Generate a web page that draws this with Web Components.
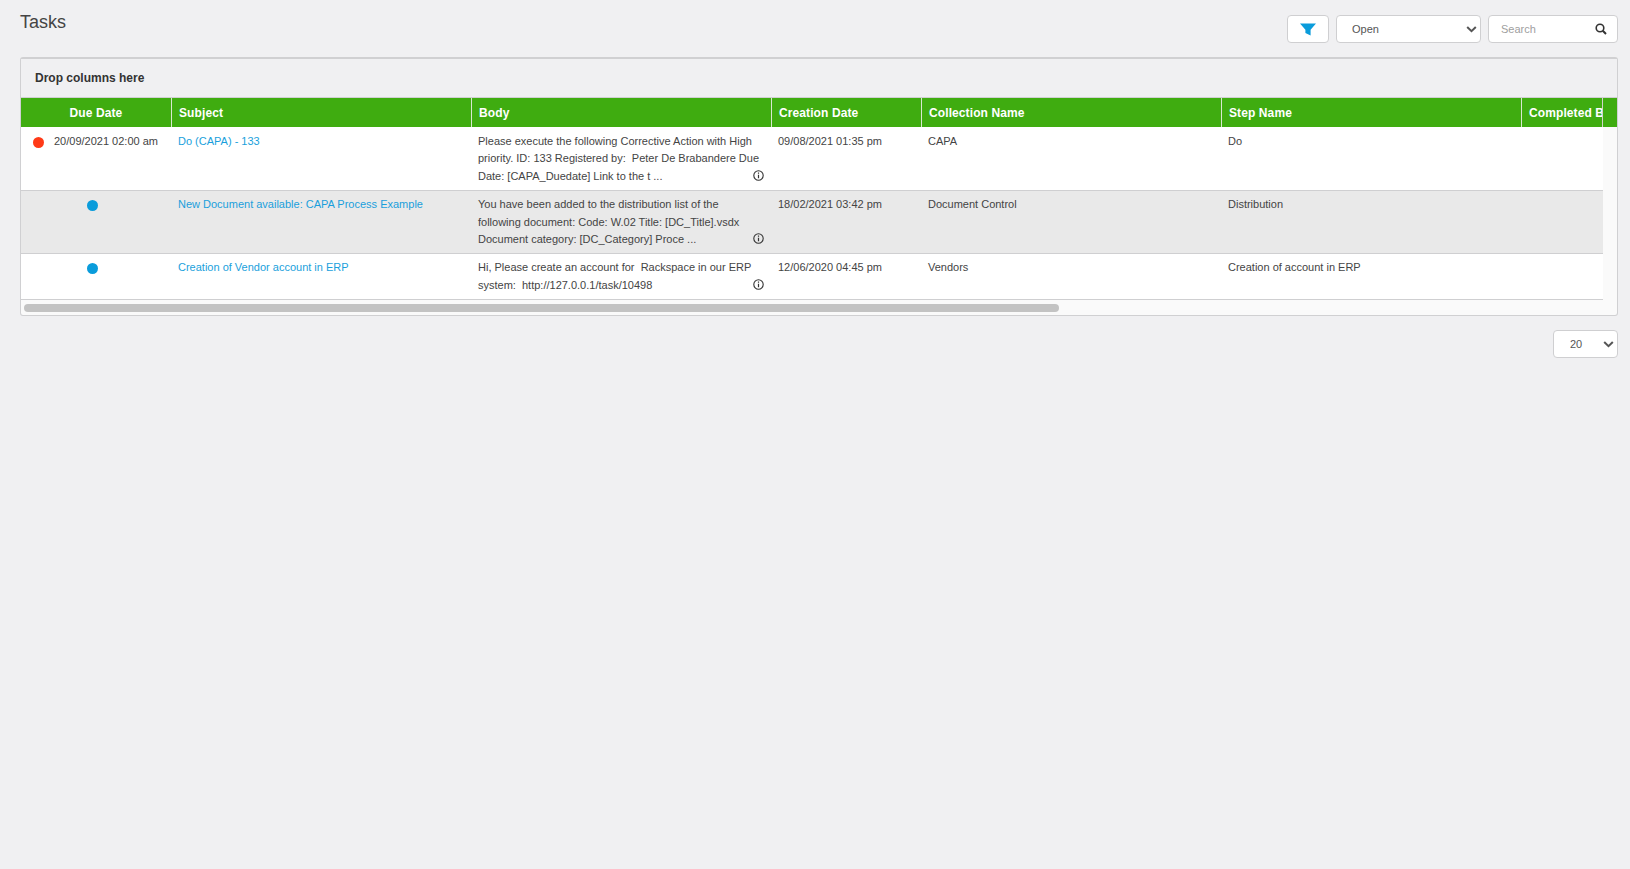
<!DOCTYPE html>
<html>
<head>
<meta charset="utf-8">
<title>Tasks</title>
<style>
    html, body {
        margin: 0;
        height: 100%;
        background-color: #f0f0f2;
        font-family: "Liberation Sans", Arial, sans-serif;
        color: #333;
    }
</style>
</head>
<body>
<tasks-page></tasks-page>

<script>
const COLUMNS = '151px 300px 300px 150px 300px 300px 300px';

class SelectBox extends HTMLElement {
    constructor() {
        super();
        this.attachShadow({ mode: 'open' });
        const options = (this.getAttribute('options') || '').split(',');
        this.shadowRoot.innerHTML = `
            <style>
                :host {
                    display: block;
                    position: relative;
                    box-sizing: border-box;
                    height: 28px;
                }
                select {
                    appearance: none;
                    -webkit-appearance: none;
                    width: 100%;
                    height: 100%;
                    box-sizing: border-box;
                    border: 1px solid #cfcfd1;
                    border-radius: 4px;
                    background-color: #fff;
                    color: #555;
                    font: 11px "Liberation Sans", Arial, sans-serif;
                    padding: 0 0 0 var(--pad, 15px);
                    outline: none;
                }
                svg {
                    position: absolute;
                    right: 4px;
                    top: 11px;
                    pointer-events: none;
                }
            </style>
            <select>${options.map(o => `<option>${o}</option>`).join('')}</select>
            <svg width="11" height="7" viewBox="0 0 11 7"><path d="M1.2 1 5.5 5.2 9.8 1" fill="none" stroke="#555" stroke-width="2"/></svg>
        `;
    }
}

class TasksToolbar extends HTMLElement {
    constructor() {
        super();
        this.attachShadow({ mode: 'open' });
        this.shadowRoot.innerHTML = `
            <style>
                :host {
                    display: flex;
                    justify-content: space-between;
                    align-items: flex-start;
                    height: 57px;
                }
                h1 {
                    margin: 12px 0 0;
                    font-size: 18px;
                    line-height: 21px;
                    font-weight: normal;
                    color: #444;
                }
                .tools {
                    display: flex;
                    gap: 7px;
                    margin-top: 15px;
                }
                button {
                    width: 42px;
                    height: 28px;
                    box-sizing: border-box;
                    padding: 0;
                    border: 1px solid #cfcfd1;
                    border-radius: 4px;
                    background-color: #fff;
                    display: flex;
                    align-items: center;
                    justify-content: center;
                }
                select-box { width: 145px; }
                .search {
                    width: 130px;
                    height: 28px;
                    box-sizing: border-box;
                    border: 1px solid #cfcfd1;
                    border-radius: 4px;
                    background-color: #fff;
                    display: flex;
                    align-items: center;
                    padding: 0 10px 0 12px;
                }
                input {
                    flex: 1;
                    min-width: 0;
                    border: none;
                    outline: none;
                    padding: 0;
                    background: transparent;
                    font: 11px "Liberation Sans", Arial, sans-serif;
                }
                input::placeholder { color: #a0a0a0; opacity: 1; }
            </style>
            <h1>Tasks</h1>
            <div class="tools">
                <button aria-label="Filter">
                    <svg width="16" height="13" viewBox="0 0 16 13"><path d="M0 .5H16L10.6 6.8V12.5L5.4 10V6.8Z" fill="#0a9cdb"/></svg>
                </button>
                <select-box options="Open,Closed,All"></select-box>
                <div class="search">
                    <input placeholder="Search">
                    <svg width="12" height="12" viewBox="0 0 12 12"><circle cx="5" cy="5" r="3.8" fill="none" stroke="#333" stroke-width="1.6"/><path d="M7.8 7.8 11 11" stroke="#333" stroke-width="2"/></svg>
                </div>
            </div>
        `;
    }
}

class GridHeader extends HTMLElement {
    constructor() {
        super();
        this.attachShadow({ mode: 'open' });
        const titles = ['Due Date', 'Subject', 'Body', 'Creation Date', 'Collection Name', 'Step Name', 'Completed By'];
        this.shadowRoot.innerHTML = `
            <style>
                :host {
                    display: block;
                    height: 29.4px;
                    background-color: #3fac10;
                    overflow: hidden;
                }
                .clip {
                    width: 1581px;
                    overflow: hidden;
                    border-right: 1px solid #cfd6c9;
                    height: 100%;
                }
                .cols {
                    display: grid;
                    grid-template-columns: ${COLUMNS};
                    height: 100%;
                    width: max-content;
                }
                span {
                    box-sizing: border-box;
                    border-right: 1px solid #d8e8d0;
                    padding-left: 7px;
                    color: #fff;
                    font-size: 12px;
                    letter-spacing: 0.1px;
                    font-weight: bold;
                    line-height: 30px;
                    white-space: nowrap;
                    overflow: hidden;
                }
                span:first-child { text-align: center; padding-left: 0; }
            </style>
            <div class="clip"><div class="cols">${titles.map(t => `<span>${t}</span>`).join('')}</div></div>
        `;
    }
}

class TaskRow extends HTMLElement {
    constructor() {
        super();
        this.attachShadow({ mode: 'open' });
        const overdue = this.hasAttribute('overdue');
        const due = this.getAttribute('due') || '';
        this.shadowRoot.innerHTML = `
            <style>
                :host {
                    display: block;
                    box-sizing: border-box;
                    width: 1582px;
                    background-color: #fff;
                    border-bottom: 1px solid #cfcfd1;
                    font-size: 11px;
                    line-height: 17.6px;
                    color: #444;
                }
                :host([shaded]) { background-color: #e9e9e9; }
                .cols {
                    display: grid;
                    grid-template-columns: 151px 300px 300px 150px 300px 281px;
                }
                .cell {
                    padding: 5.4px 7px 4.1px 6px;
                    min-width: 0;
                }
                .due {
                    display: flex;
                    gap: 10px;
                    padding: 5.4px 0 0 12px;
                    white-space: nowrap;
                }
                .due.only {
                    justify-content: center;
                    padding-left: 0;
                    padding-right: 8px;
                }
                .dot {
                    flex: none;
                    width: 11px;
                    height: 11px;
                    border-radius: 50%;
                    margin-top: 3.8px;
                    background-color: ${overdue ? '#ff3a17' : '#0a9cdb'};
                }
                a { color: #1a9fdc; text-decoration: none; }
                .body { position: relative; padding-right: 10px; }
                svg {
                    position: absolute;
                    right: 8px;
                    bottom: 9px;
                }
            </style>
            <div class="cols">
                <div class="due ${due ? '' : 'only'}"><i class="dot"></i>${due}</div>
                <div class="cell"><a href="#"><slot name="subject"></slot></a></div>
                <div class="cell body"><slot name="body"></slot>
                    <svg width="11" height="11" viewBox="0 0 11 11"><circle cx="5.5" cy="5.5" r="4.7" fill="none" stroke="#333" stroke-width="1.1"/><path d="M5.5 4.8V8.2M5.5 2.6V3.8" stroke="#333" stroke-width="1.2"/></svg>
                </div>
                <div class="cell">${this.getAttribute('created') || ''}</div>
                <div class="cell">${this.getAttribute('collection') || ''}</div>
                <div class="cell">${this.getAttribute('step') || ''}</div>
            </div>
        `;
    }
}

class TaskGrid extends HTMLElement {
    constructor() {
        super();
        this.attachShadow({ mode: 'open' });
        this.shadowRoot.innerHTML = `
            <style>
                :host {
                    display: block;
                    box-sizing: border-box;
                    border: 1px solid #d0d0d2;
                    border-top-width: 2px;
                    border-radius: 3px;
                    background-color: #fafafa;
                }
                .drop {
                    height: 39px;
                    line-height: 38px;
                    box-sizing: border-box;
                    border-bottom: 1px solid #d0d0d2;
                    padding-left: 14px;
                    background-color: #f0f0f2;
                    font-size: 12px;
                    font-weight: bold;
                    color: #333;
                }
                .scroll {
                    height: 15.3px;
                    width: 1582px;
                    box-sizing: border-box;
                    padding: 4.3px 0 0 3px;
                }
                .thumb {
                    width: 1035px;
                    height: 8px;
                    border-radius: 4px;
                    background-color: #c3c3c3;
                }
            </style>
            <div class="drop">Drop columns here</div>
            <slot></slot>
            <div class="scroll"><div class="thumb"></div></div>
        `;
    }
}

class TasksPage extends HTMLElement {
    constructor() {
        super();
        this.attachShadow({ mode: 'open' });
        this.shadowRoot.innerHTML = `
            <style>
                :host {
                    display: block;
                    padding: 0 12px 0 20px;
                }
                .pager {
                    display: flex;
                    justify-content: flex-end;
                    margin-top: 14px;
                }
                select-box { width: 65px; --pad: 16px; }
            </style>
            <tasks-toolbar></tasks-toolbar>
            <task-grid>
                <grid-header></grid-header>
                <task-row overdue due="20/09/2021 02:00 am" created="09/08/2021 01:35 pm" collection="CAPA" step="Do">
                    <span slot="subject">Do (CAPA) - 133</span>
                    <span slot="body">Please execute the following Corrective Action with High priority. ID: 133 Registered by:&nbsp; Peter De Brabandere Due Date: [CAPA_Duedate] Link to the t ...</span>
                </task-row>
                <task-row shaded created="18/02/2021 03:42 pm" collection="Document Control" step="Distribution">
                    <span slot="subject">New Document available: CAPA Process Example</span>
                    <span slot="body">You have been added to the distribution list of the following document: Code: W.02 Title: [DC_Title].vsdx Document category: [DC_Category] Proce ...</span>
                </task-row>
                <task-row created="12/06/2020 04:45 pm" collection="Vendors" step="Creation of account in ERP">
                    <span slot="subject">Creation of Vendor account in ERP</span>
                    <span slot="body">Hi, Please create an account for&nbsp; Rackspace in our ERP system:&nbsp; http://127.0.0.1/task/10498</span>
                </task-row>
            </task-grid>
            <div class="pager"><select-box options="20,50,100"></select-box></div>
        `;
    }
}

customElements.define('select-box', SelectBox);
customElements.define('tasks-toolbar', TasksToolbar);
customElements.define('grid-header', GridHeader);
customElements.define('task-row', TaskRow);
customElements.define('task-grid', TaskGrid);
customElements.define('tasks-page', TasksPage);
</script>
</body>
</html>
